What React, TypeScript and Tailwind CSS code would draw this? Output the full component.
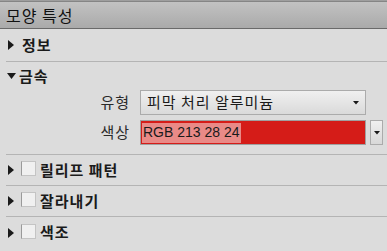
import React from "react";

const font = { fontFamily: '"Noto Sans CJK KR", "Noto Sans", sans-serif' };

function RightArrow() {
  return (
    <svg width="6" height="10" viewBox="0 0 6 10" className="shrink-0">
      <polygon points="0,0 6,5 0,10" fill="#1a1a1a" />
    </svg>
  );
}

function DownArrow() {
  return (
    <svg width="9" height="6" viewBox="0 0 9 6" className="shrink-0">
      <polygon points="0,0 9,0 4.5,6" fill="#1a1a1a" />
    </svg>
  );
}

function SmallArrow() {
  return (
    <svg width="6" height="4" viewBox="0 0 6 4">
      <polygon points="0,0 6,0 3,3.5" fill="#1a1a1a" />
    </svg>
  );
}

function Divider() {
  return <div className="ml-[6px] h-px bg-[#b4b4b4]" />;
}

function CheckRow({ label, h }: { label: string; h: string }) {
  return (
    <div className={`flex items-center pl-[8px] ${h}`}>
      <RightArrow />
      <div className="ml-[7px] mb-[3px] h-[15px] w-[15px] border border-[#c4c4c4] border-l-[#9a9a9a] bg-[#f0f0f0]" />
      <span className="ml-[4px] text-[15px] font-bold tracking-[1px] text-[#1a1a1a]">{label}</span>
    </div>
  );
}

export default function App() {
  return (
    <div className="h-[251px] w-[387px] overflow-hidden bg-[#dcdcdc]" style={font}>
      <div className="h-px bg-[#9e9e9e]" />
      <div className="flex h-[28px] items-center border-t border-b border-t-[#858585] border-b-[#6a6a6a] bg-gradient-to-b from-[#c2c2c2] to-[#aaaaaa] pl-[6px]">
        <span className="text-[16px] tracking-[1px] text-[#111111]">모양 특성</span>
      </div>

      <div className="flex h-[32px] items-center pl-[8px]">
        <RightArrow />
        <span className="ml-[8px] text-[15px] font-bold tracking-[1px] text-[#1a1a1a]">정보</span>
      </div>
      <Divider />

      <div className="flex h-[28px] items-center pl-[7px]">
        <DownArrow />
        <span className="ml-[3px] text-[15px] font-bold tracking-[1px] text-[#1a1a1a]">금속</span>
      </div>
      <div className="flex flex-col gap-[5px] pb-[9px]">
        <div className="flex h-[25px] items-center">
          <span className="w-[132px] pr-[2px] text-right text-[15px] tracking-[1px] text-[#2a2a2a]">유형</span>
          <div className="ml-[8px] flex h-[25px] w-[226px] items-center justify-between border border-[#ababab] bg-gradient-to-b from-[#f0f0f0] to-[#dadada] pl-[6px] pr-[6px]">
            <span className="text-[15px] tracking-[1px] text-[#1a1a1a]">피막 처리 알루미늄</span>
            <SmallArrow />
          </div>
        </div>
        <div className="flex h-[25px] items-center">
          <span className="w-[132px] pr-[2px] text-right text-[15px] tracking-[1px] text-[#2a2a2a]">색상</span>
          <div className="ml-[8px] flex h-[25px] w-[226px] items-center border border-[#a0a0a0] bg-[#d51c18] pl-[1px]">
            <span
              className="flex h-[20px] items-center bg-[#e98a87] px-[1px] text-[14px] text-[#1a1a1a]"
              style={{ fontFamily: '"Liberation Sans", Arial, sans-serif' }}
            >
              RGB 213 28 24
            </span>
          </div>
          <div className="ml-[4px] flex h-[25px] w-[13px] items-center justify-center border border-[#ababab] bg-gradient-to-b from-[#f0f0f0] to-[#d8d8d8]">
            <SmallArrow />
          </div>
        </div>
      </div>
      <Divider />

      <CheckRow label="릴리프 패턴" h="h-[30px]" />
      <Divider />
      <CheckRow label="잘라내기" h="h-[30px]" />
      <Divider />
      <CheckRow label="색조" h="h-[31px]" />
    </div>
  );
}
